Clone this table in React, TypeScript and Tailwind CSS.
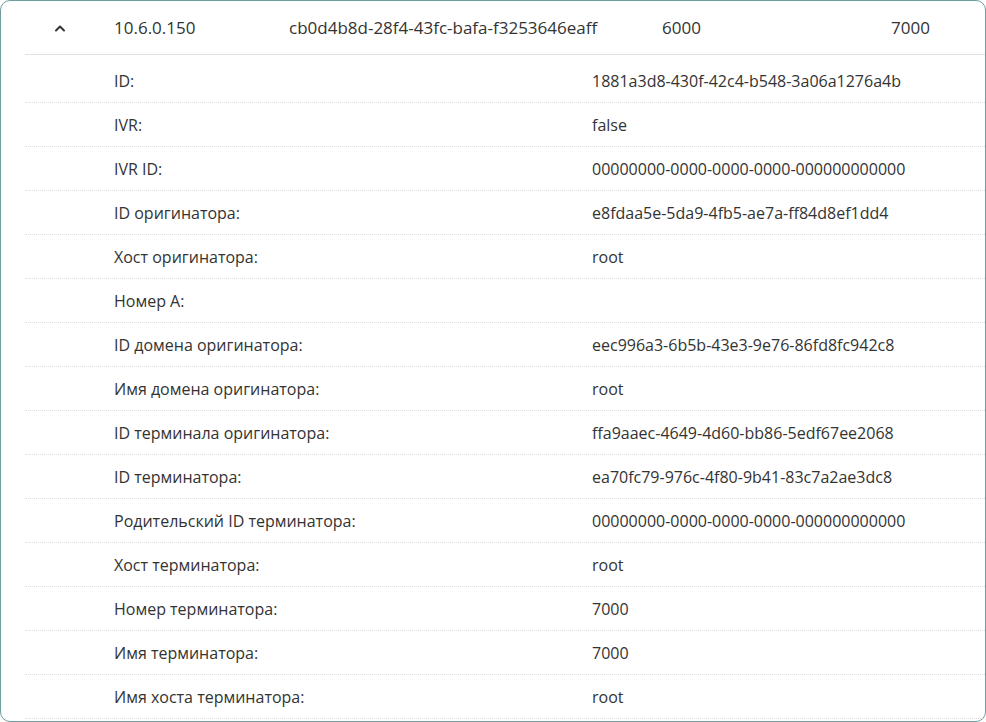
import React from "react";

const rows: [string, string][] = [
  ["ID:", "1881a3d8-430f-42c4-b548-3a06a1276a4b"],
  ["IVR:", "false"],
  ["IVR ID:", "00000000-0000-0000-0000-000000000000"],
  ["ID оригинатора:", "e8fdaa5e-5da9-4fb5-ae7a-ff84d8ef1dd4"],
  ["Хост оригинатора:", "root"],
  ["Номер A:", ""],
  ["ID домена оригинатора:", "eec996a3-6b5b-43e3-9e76-86fd8fc942c8"],
  ["Имя домена оригинатора:", "root"],
  ["ID терминала оригинатора:", "ffa9aaec-4649-4d60-bb86-5edf67ee2068"],
  ["ID терминатора:", "ea70fc79-976c-4f80-9b41-83c7a2ae3dc8"],
  ["Родительский ID терминатора:", "00000000-0000-0000-0000-000000000000"],
  ["Хост терминатора:", "root"],
  ["Номер терминатора:", "7000"],
  ["Имя терминатора:", "7000"],
  ["Имя хоста терминатора:", "root"],
];

export default function App() {
  return (
    <div
      className="w-[986px] h-[722px] bg-white text-[#333333] text-base overflow-hidden"
      style={{ fontFamily: '"Open Sans", "Noto Sans", sans-serif' }}
    >
      <div className="h-full border border-[#6f9c9c] rounded-[10px] overflow-hidden pl-6">
        {/* summary row */}
        <div className="flex items-center h-[54px] border-b border-[#e2e2e2] text-[17px]">
          <div className="w-[89px] flex justify-center pr-[19px]">
            <svg width="12" height="8" viewBox="0 0 12 8" fill="none">
              <path d="M2 6.5 L6 2.5 L10 6.5" stroke="#333" strokeWidth="2" strokeLinecap="round" strokeLinejoin="round" />
            </svg>
          </div>
          <div className="w-[175px]">10.6.0.150</div>
          <div className="w-[373px]">cb0d4b8d-28f4-43fc-bafa-f3253646eaff</div>
          <div className="w-[229px]">6000</div>
          <div>7000</div>
        </div>

        {/* details */}
        <div className="pt-1">
          {rows.map(([label, value]) => (
            <div key={label} className="flex items-center h-[44px] border-b border-dotted border-[#dcdcdc]">
              <div className="w-[567px] pl-[89px]">{label}</div>
              <div>{value}</div>
            </div>
          ))}
        </div>
      </div>
    </div>
  );
}
